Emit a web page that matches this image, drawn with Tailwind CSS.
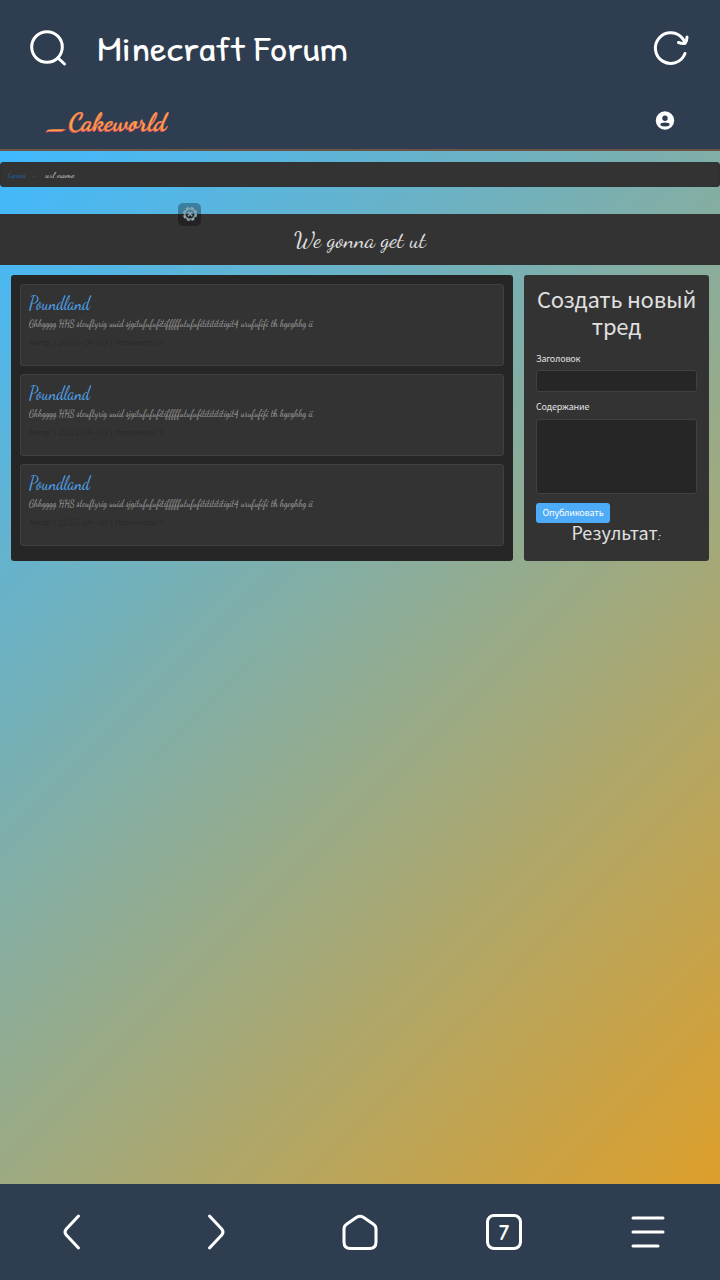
<!DOCTYPE html>
<html lang="ru">
<head>
<meta charset="utf-8">
<title>Minecraft Forum</title>
<script src="https://cdn.jsdelivr.net/npm/@tailwindcss/browser@4"></script>
</head>
<body class="w-[720px] h-[1280px] overflow-hidden flex flex-col bg-[#2e3e50] font-['Noto_Sans',sans-serif] text-[#e0e0e0]">
<header class="h-24 shrink-0 flex items-center text-white pl-[28px] pr-[28px]">
  <svg class="size-10" viewBox="0 0 40 40" fill="none" stroke="currentColor" stroke-width="3" stroke-linecap="round"><circle cx="19" cy="19" r="15.3"/><path d="M30 30l6.500 6"/></svg>
  <h1 class="ml-[28px] grow"><svg class="w-[254px] h-12 block" fill="currentColor"><text x="1" y="36.500" textLength="251" lengthAdjust="spacingAndGlyphs" class="font-['Patrick_Hand','Comic_Neue','Lato',sans-serif] text-[34px] font-normal">Minecraft Forum</text></svg></h1>
  <svg class="size-10" viewBox="0 0 40 40" fill="none" stroke="currentColor" stroke-width="3" stroke-linecap="round" stroke-linejoin="round"><path d="M33 25.500A15.300 15.300 0 1 1 31 11l2 3.500"/><path d="M26.500 14.500q4 1.500 6.700 .7q1.800-2.700 1.800-6.200"/></svg>
</header>
<div class="h-[55px] shrink-0 flex items-center justify-between pl-[45px] pr-[45px] border-b-2 border-[#6b5446] pb-1">
  <svg class="w-[130px] h-10 block" aria-label="_Cakeworld"><g class="font-['Dancing_Script','Liberation_Serif',serif] font-bold text-[25px]"><text x="0.500" y="30" textLength="120" lengthAdjust="spacingAndGlyphs" fill="#e2506f">_Cakeworld</text><text x="1.500" y="29" textLength="120" lengthAdjust="spacingAndGlyphs" fill="#fca53c" stroke="#e8606c" stroke-width=".25">_Cakeworld</text></g></svg>
  <svg class="size-5 mt-[-1px]" viewBox="0 0 20 20"><circle cx="10" cy="10.500" r="9.200" fill="#fff"/><circle cx="10" cy="8.200" r="2.700" fill="#2e3e50"/><ellipse cx="10" cy="14.500" rx="4.600" ry="1.900" fill="#2e3e50"/></svg>
</div>
<main class="relative grow flex flex-col bg-linear-[135deg] from-[#40b9ff] to-[#dd9f2b]">
  <nav class="mt-[11px] h-[25px] bg-[#333] rounded-[3px] border border-[#2b3236] flex items-center">
    <svg class="w-24 h-5" ><g class="font-['Dancing_Script','Liberation_Serif',serif] text-[9.5px]"><text x="7" y="13" textLength="18" lengthAdjust="spacingAndGlyphs" fill="#1668b0">topics</text><text x="31" y="13" fill="#4b4b4b">-</text><text x="44.500" y="13" textLength="29" lengthAdjust="spacingAndGlyphs" fill="#d0d0d0">url name</text></g></svg>
  </nav>
  <h2 class="mt-[27px] h-[51px] bg-[#333] flex items-center justify-center"><svg class="w-[140px] h-[46px]" fill="#e0e0e0"><text x="4" y="29.500" textLength="132" lengthAdjust="spacingAndGlyphs" class="font-['Dancing_Script','Liberation_Serif',serif] text-[23.5px]">We gonna get ut</text></svg></h2>
  <div class="absolute left-[178px] top-[52px] size-[23px] rounded-[5px] bg-black/30 flex items-center justify-center">
    <svg class="size-4" viewBox="0 0 16 16" fill="none" stroke="#8fa9b3"><circle cx="8" cy="7" r="6.300" stroke-width="1.600" stroke-dasharray="3.100 1.848"/><circle cx="8" cy="7" r="5.200" stroke-width="1.300"/><path d="M5.800 4.800l4.500 4.500M10.300 4.800l-4.500 4.500" stroke-width="1.300"/></svg>
  </div>
  <div class="flex gap-[11px] mt-[10px] px-[11px] h-[286px]">
    <section class="w-[502px] bg-[#262626] rounded-[3px] px-[9px] pt-[9px] flex flex-col gap-2">
      <article class="h-[82px] bg-[#333] border border-[#404040] rounded-[3px]"><svg class="w-[482px] h-20"><g class="font-['Dancing_Script','Liberation_Serif',serif]"><text x="8" y="23.500" textLength="61" lengthAdjust="spacingAndGlyphs" class="text-[18.5px]" fill="#4fa9f5">Poundland</text><text x="8" y="41.500" textLength="284" lengthAdjust="spacingAndGlyphs" class="text-[9.8px]" fill="#a3a3a3">Ghhgggg HHS steuftyrig uuid sjgitufufufitifffffutufufitititititigit4 urufufifi th hgeghhg ii</text></g><text x="8" y="59.500" textLength="134" lengthAdjust="spacingAndGlyphs" class="text-[7.5px]" fill="#262a2c">Автор: | <tspan class="font-['Dancing_Script','Liberation_Serif',serif] text-[9.5px]">2025-04-03</tspan> | Просмотры: 0</text></svg></article>
      <article class="h-[82px] bg-[#333] border border-[#404040] rounded-[3px]"><svg class="w-[482px] h-20"><g class="font-['Dancing_Script','Liberation_Serif',serif]"><text x="8" y="23.500" textLength="61" lengthAdjust="spacingAndGlyphs" class="text-[18.5px]" fill="#4fa9f5">Poundland</text><text x="8" y="41.500" textLength="284" lengthAdjust="spacingAndGlyphs" class="text-[9.8px]" fill="#a3a3a3">Ghhgggg HHS steuftyrig uuid sjgitufufufitifffffutufufitititititigit4 urufufifi th hgeghhg ii</text></g><text x="8" y="59.500" textLength="134" lengthAdjust="spacingAndGlyphs" class="text-[7.5px]" fill="#262a2c">Автор: | <tspan class="font-['Dancing_Script','Liberation_Serif',serif] text-[9.5px]">2025-04-03</tspan> | Просмотры: 0</text></svg></article>
      <article class="h-[82px] bg-[#333] border border-[#404040] rounded-[3px]"><svg class="w-[482px] h-20"><g class="font-['Dancing_Script','Liberation_Serif',serif]"><text x="8" y="23.500" textLength="61" lengthAdjust="spacingAndGlyphs" class="text-[18.5px]" fill="#4fa9f5">Poundland</text><text x="8" y="41.500" textLength="284" lengthAdjust="spacingAndGlyphs" class="text-[9.8px]" fill="#a3a3a3">Ghhgggg HHS steuftyrig uuid sjgitufufufitifffffutufufitititititigit4 urufufifi th hgeghhg ii</text></g><text x="8" y="59.500" textLength="134" lengthAdjust="spacingAndGlyphs" class="text-[7.5px]" fill="#262a2c">Автор: | <tspan class="font-['Dancing_Script','Liberation_Serif',serif] text-[9.5px]">2025-04-03</tspan> | Просмотры: 0</text></svg></article>
    </section>
    <section class="w-[185px] bg-[#333] rounded-[3px] px-3 pt-[10px] font-['Noto_Sans_CJK_SC','Noto_Sans',sans-serif]">
      <h3 class="text-[22px] leading-[27px] text-center -mx-2 tracking-[-0.2px]">Создать новый<br>тред</h3>
      <label class="block mt-[12px] h-[15px] leading-[15px] text-[9px] tracking-[-0.2px]">Заголовок</label>
      <div class="mt-[4px] h-[22px] w-[161px] rounded-[3px] bg-[#262626] border border-[#404040]"></div>
      <label class="block mt-[7px] h-[15px] leading-[15px] text-[9px] tracking-[-0.2px]">Содержание</label>
      <div class="mt-[5px] h-[75px] w-[161px] rounded-[3px] bg-[#262626] border border-[#404040]"></div>
      <button class="block mt-[9px] h-5 w-[74px] rounded-[3px] bg-[#4dabf7] text-white text-[9px] tracking-[-0.2px] leading-[19px] pb-px text-center whitespace-nowrap">Опубликовать</button>
      <h4 class="text-[18px] leading-[19px] text-center">Результат<span class="font-['Dancing_Script','Liberation_Serif',serif] text-[18px]">:</span></h4>
    </section>
  </div>
</main>
<footer class="h-24 shrink-0 grid grid-cols-5 place-items-center text-white">
  <svg class="size-10" viewBox="0 0 40 40" fill="none" stroke="currentColor" stroke-width="3" stroke-linecap="round"><path d="M26.500 4L14.300 17q-2.600 3 0 6L26.500 36"/></svg>
  <svg class="size-10" viewBox="0 0 40 40" fill="none" stroke="currentColor" stroke-width="3" stroke-linecap="round"><path d="M13.500 4L25.700 17q2.600 3 0 6L13.500 36"/></svg>
  <svg class="size-10" viewBox="0 0 40 40" fill="none" stroke="currentColor" stroke-width="3" stroke-linejoin="round"><path d="M4 17q0-3 2.500-4.700L17 5q3-1.700 6 0l10.500 7.300Q36 14 36 17v13q0 6.500-6.500 6.500h-19Q4 36.500 4 30z"/></svg>
  <div class="size-9 rounded-[8px] border-3 border-white flex items-center justify-center"><svg class="size-8 shrink-0" viewBox="0 0 32 32"><text x="11" y="24" textLength="10" lengthAdjust="spacingAndGlyphs" fill="currentColor" class="text-[23px] font-['Comic_Neue','Lato',sans-serif] font-bold">7</text></svg></div>
  <svg class="size-10" viewBox="0 0 40 40" fill="none" stroke="currentColor" stroke-width="3" stroke-linecap="round"><path d="M5 6h30M5 20h30M5 34h25"/></svg>
</footer>
</body>
</html>
